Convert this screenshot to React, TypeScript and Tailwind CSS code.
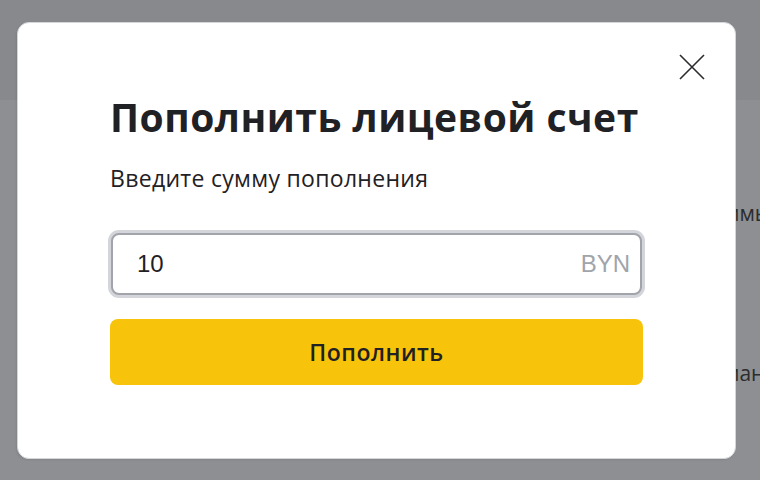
import React from "react";

export default function App() {
  return (
    <div className="relative h-[480px] w-[760px] overflow-hidden bg-[#8b8c8f] font-['Open_Sans',sans-serif]">
      {/* dimmed page beneath */}
      <div className="flex h-full flex-col">
        <div className="h-[100px] bg-[#88898c]" />
        <div className="flex flex-1 flex-col bg-[#8e8f92] pl-[724px] pt-[98px] text-[21px] leading-[30px] text-[#2b2c2e]">
          <div>ммы</div>
          <div className="mt-[130px]">ман</div>
        </div>
      </div>

      {/* modal */}
      <div className="absolute left-[17px] top-[22px] flex h-[437px] w-[719px] flex-col rounded-[12px] border border-[#d4d6da] bg-white shadow-[-1px_1px_2px_rgba(0,0,0,0.08)]">
        <div className="flex justify-end pr-[30px] pt-[31px]">
          <svg width="26" height="26" viewBox="0 0 26 26" fill="none" stroke="#2b2c2e" strokeWidth="1.6">
            <path d="M1 1L25 25M25 1L1 25" />
          </svg>
        </div>
        <div className="flex flex-col px-[92px] pt-[14px]">
          <h1 className="text-[39px] font-bold leading-[46px] tracking-[0.5px] text-[#1f2124]">
            Пополнить лицевой счет
          </h1>
          <p className="mt-[23px] text-[23px] leading-[30px] tracking-[0.3px] text-[#1f2124]">
            Введите сумму пополнения
          </p>
          <div className="-mx-[2px] mt-[37px] rounded-[11px] bg-[#d3d5da] p-[3px]">
            <div className="flex h-[62px] items-center justify-between rounded-[8px] border-2 border-[#a1a4aa] bg-white pl-[24px] pr-[10px] font-['Liberation_Sans',sans-serif]">
              <span className="text-[24px] text-[#1f2124]">10</span>
              <span className="text-[24px] text-[#a0a4ab]">BYN</span>
            </div>
          </div>
          <button className="mt-[21px] flex h-[66px] items-center justify-center rounded-[8px] bg-[#f7c30b] text-[23px] font-semibold tracking-[0.5px] text-[#1f2124]">
            Пополнить
          </button>
        </div>
      </div>
    </div>
  );
}
